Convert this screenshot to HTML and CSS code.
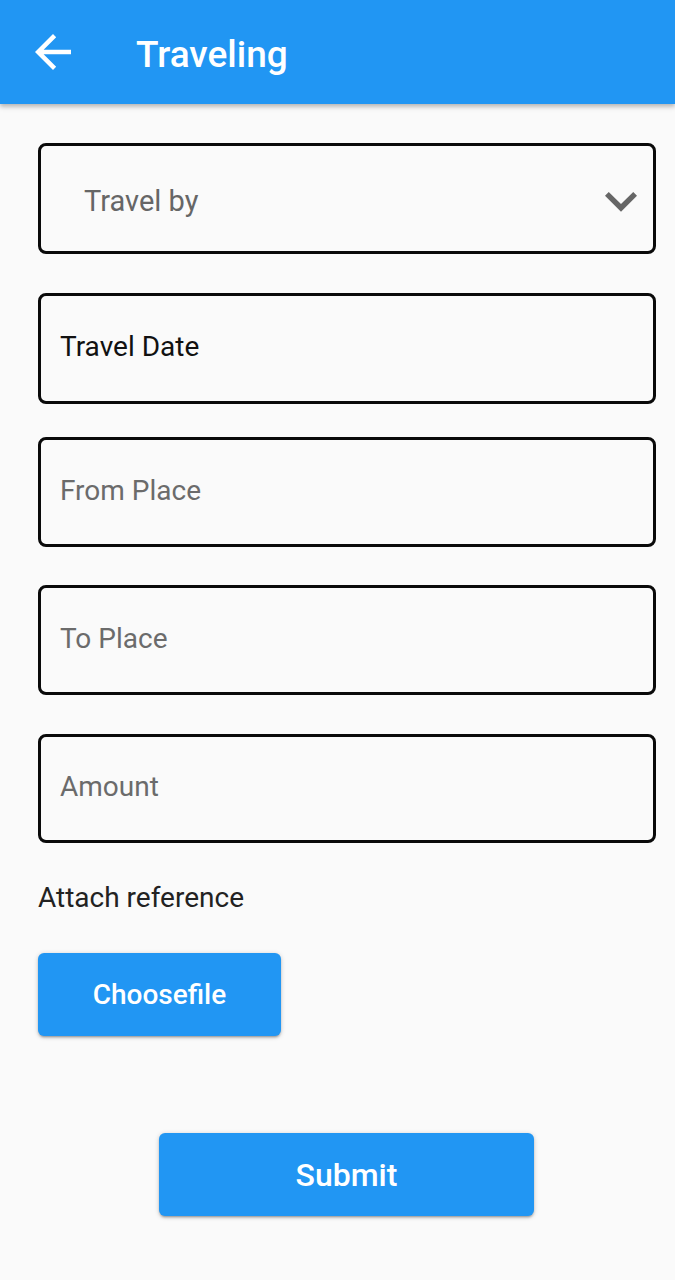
FILE: index.html
```html
<!DOCTYPE html>
<html>
<head>
<meta charset="utf-8">
<link rel="stylesheet" href="styles.css">
</head>
<body>
<header class="appbar">
  <svg class="back" viewBox="0 0 24 24"><path d="M20 11H7.83l5.59-5.59L12 4l-8 8 8 8 1.41-1.41L7.83 13H20v-2z" fill="#fff"/></svg>
  <h1 class="title">Traveling</h1>
</header>
<main class="content">
  <div class="field field-select f1">
    <span class="select-text">Travel by</span>
    <svg class="chev" viewBox="0 0 24 24"><path d="M7.41 8.59L12 13.17l4.59-4.58L18 10l-6 6-6-6 1.41-1.41z" fill="#666"/></svg>
  </div>
  <div class="field f2"><span class="value">Travel Date</span></div>
  <div class="field f3"><span class="ph">From Place</span></div>
  <div class="field f4"><span class="ph">To Place</span></div>
  <div class="field f5"><span class="ph">Amount</span></div>
  <p class="label">Attach reference</p>
  <button class="btn choose">Choosefile</button>
  <div class="submit-row"><button class="btn submit">Submit</button></div>
</main>
</body>
</html>
```
FILE: styles.css
```css
* { box-sizing: border-box; }
html, body { margin: 0; padding: 0; }
body {
  background: #fafafa;
  font-family: Roboto, "Liberation Sans", sans-serif;
  width: 675px;
  height: 1280px;
  overflow: hidden;
}
.appbar {
  height: 104px;
  background: #2196f3;
  display: flex;
  align-items: center;
  box-shadow: 0 2px 4px rgba(0,0,0,0.2), 0 4px 5px rgba(0,0,0,0.1);
  position: relative;
}
.back {
  width: 54px;
  height: 54px;
  margin-left: 26px;
}
.title {
  margin: 0 0 0 56px;
  color: #fff;
  font-size: 37px;
  font-weight: 500;
  padding-top: 4px;
}
.content {
  padding: 0 19px 0 38px;
  display: flex;
  flex-direction: column;
}
.field {
  height: 110px;
  border: 3px solid #0a0a0a;
  border-radius: 8px;
  display: flex;
  align-items: center;
  padding-left: 19px;
  font-size: 28px;
  padding-bottom: 4px;
}
.f1 { margin-top: 39px; height: 111px; }
.f2 { margin-top: 39px; height: 111px; }
.f3 { margin-top: 33px; }
.f4 { margin-top: 38px; }
.f5 { margin-top: 39px; height: 109px; }
.field-select {
  padding-left: 43px;
  padding-right: 0;
  padding-bottom: 0;
  padding-top: 4px;
  justify-content: space-between;
}
.select-text { color: #666; font-size: 29px; }
.chev { width: 64px; height: 64px; margin-right: 0; }
.value { color: #111; }
.ph { color: #6b6b6b; }
.label {
  margin: 38px 0 0 0;
  font-size: 28px;
  color: #222;
  line-height: 34px;
}
.btn {
  border: none;
  background: #2196f3;
  color: #fff;
  font-family: Roboto, "Liberation Sans", sans-serif;
  font-weight: 500;
  border-radius: 6px;
  box-shadow: 0 2px 2px rgba(0,0,0,0.14), 0 3px 1px -2px rgba(0,0,0,0.12), 0 1px 5px rgba(0,0,0,0.2);
  padding: 0;
}
.choose {
  margin-top: 38px;
  width: 243px;
  height: 83px;
  font-size: 28px;
}
.submit-row {
  display: flex;
  justify-content: center;
  margin-top: 97px;
  padding-left: 0;
  padding-right: 1px;
}
.submit {
  width: 375px;
  height: 83px;
  font-size: 32px;
}
```
